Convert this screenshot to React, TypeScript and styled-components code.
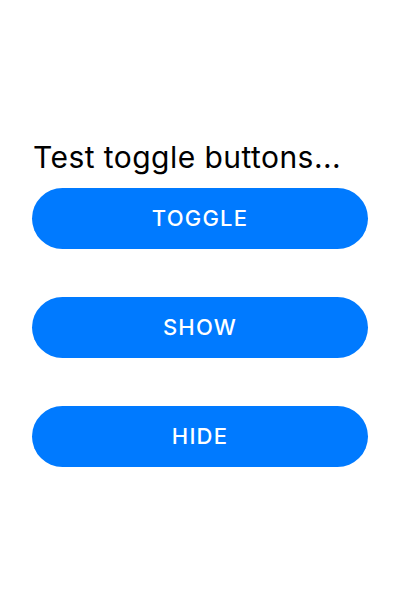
import React from "react";
import styled, { createGlobalStyle } from "styled-components";

const GlobalStyle = createGlobalStyle`
    html, body {
        margin: 0;
        padding: 0;
        background: #ffffff;
    }
    body {
        font-family: Inter, "Noto Sans", sans-serif;
    }
`;

const Screen = styled.div`
    height: 100vh;
    box-sizing: border-box;
    padding: 5px 32px 0;
    display: flex;
    flex-direction: column;
    justify-content: center;
`;

const Title = styled.h1`
    margin: 0 0 13px 1px;
    font-family: Inter, "Noto Sans", sans-serif;
    font-size: 30px;
    font-weight: 400;
    line-height: 36px;
    color: #000000;
    letter-spacing: 0.45px;
`;

const ButtonList = styled.div`
    display: flex;
    flex-direction: column;
    gap: 48px;
`;

const PillButton = styled.button`
    height: 61px;
    width: 100%;
    border: none;
    border-radius: 31px;
    background-color: #007aff;
    color: #ffffff;
    font-family: Inter, "Noto Sans", sans-serif;
    font-size: 22px;
    font-weight: 500;
    letter-spacing: 1.2px;
    text-transform: uppercase;
    cursor: pointer;
`;

export default function App() {
    return (
        <>
            <GlobalStyle />
            <Screen>
                <Title>Test toggle buttons...</Title>
                <ButtonList>
                    <PillButton>Toggle</PillButton>
                    <PillButton>Show</PillButton>
                    <PillButton>Hide</PillButton>
                </ButtonList>
            </Screen>
        </>
    );
}
